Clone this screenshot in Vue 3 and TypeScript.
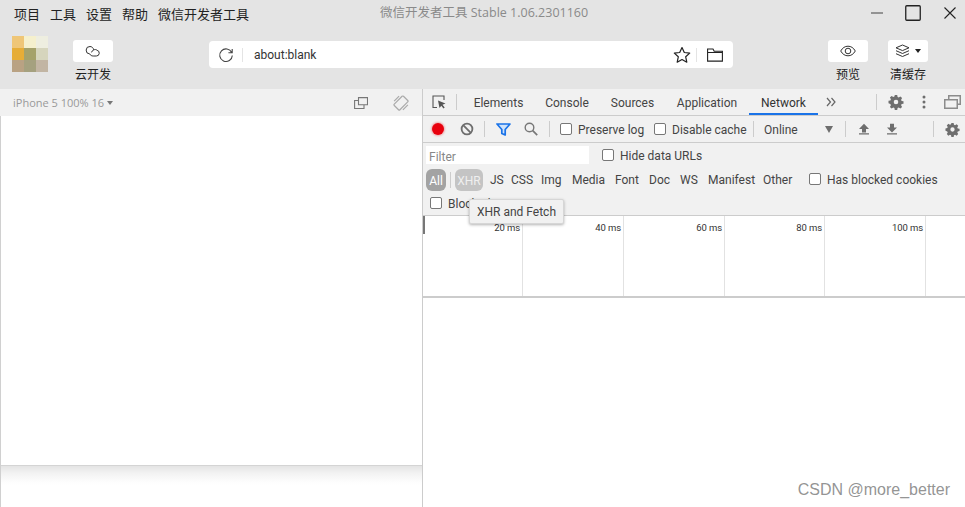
<script setup lang="ts">
const menus: string[] = ['项目', '工具', '设置', '帮助', '微信开发者工具']
const tabs: { name: string; w: number }[] = [
  { name: 'Elements', w: 71 },
  { name: 'Console', w: 66 },
  { name: 'Sources', w: 65 },
  { name: 'Application', w: 84 },
  { name: 'Network', w: 69 },
]
const types: { name: string; w: number }[] = [
  { name: 'JS', w: 21 },
  { name: 'CSS', w: 30 },
  { name: 'Img', w: 31 },
  { name: 'Media', w: 43 },
  { name: 'Font', w: 34 },
  { name: 'Doc', w: 31 },
  { name: 'WS', w: 28 },
  { name: 'Manifest', w: 55 },
  { name: 'Other', w: 46 },
]
const ticks: { label: string; w: number }[] = [
  { label: '20 ms', w: 100 },
  { label: '40 ms', w: 101 },
  { label: '60 ms', w: 101 },
  { label: '80 ms', w: 100 },
  { label: '100 ms', w: 101 },
  { label: '', w: 40 },
]
const mosaic: string[] = ['#efc677', '#f5f0cd', '#eeeee0', '#e6ad37', '#a5a26a', '#d6d5bd', '#b9a283', '#a5a17f', '#c2b5a3']
</script>

<template>
  <div class="app">
    <header class="titlebar">
      <nav class="menus"><span v-for="m in menus" :key="m">{{ m }}</span></nav>
      <div class="title">微信开发者工具 Stable 1.06.2301160</div>
      <div class="winctl">
        <svg width="14" height="14" viewBox="0 0 14 14"><path d="M1 7h12" stroke="#666" stroke-width="1.3"/></svg>
        <svg width="16" height="16" viewBox="0 0 16 16"><rect x=".75" y=".75" width="14.5" height="14.5" rx="1" fill="none" stroke="#222" stroke-width="1.3"/></svg>
        <svg width="14" height="14" viewBox="0 0 14 14"><path d="M1.5 1.5l11 11M12.500 1.500l-11 11" stroke="#222" stroke-width="1.1"/></svg>
      </div>
    </header>

    <section class="toolbar">
      <div class="logo"><i v-for="(c, i) in mosaic" :key="i" class="cell" :style="{ background: c }"></i></div>
      <div class="tool cloud">
        <button class="tbtn"><svg width="16" height="12" viewBox="0 0 16 12"><path d="M5 1.500a3.700 3.700 0 0 0-.3 7.400c.8 1.500 2 2.100 3.500 2.100h3.100a2.900 2.900 0 0 0 .8-5.700C11 4.300 9.800 4.400 8.800 4.900 8.300 2.800 6.800 1.500 5 1.500zM6.500 7.400c.3-1.300 1.200-2.100 2.300-2.500" fill="none" stroke="#333" stroke-width="1"/></svg></button>
        <span>云开发</span>
      </div>
      <div class="address">
        <svg class="refresh" width="16" height="16" viewBox="0 0 16 16"><path d="M13.700 5.500A6.300 6.300 0 1 0 14.300 8.500M14.200 2v3.800h-3.800" fill="none" stroke="#444" stroke-width="1.100"/></svg>
        <i class="addr-sep"></i>
        <span class="url">about:blank</span>
        <svg class="star" width="18" height="18" viewBox="0 0 18 18"><path d="M9 1.500l2.300 5 5.400.6-4 3.700 1.100 5.400L9 13.500l-4.800 2.700 1.100-5.400-4-3.700 5.400-.6z" fill="none" stroke="#222" stroke-width="1.200" stroke-linejoin="round"/></svg>
        <i class="addr-sep sep2"></i>
        <svg class="folder" width="16" height="14" viewBox="0 0 16 14"><path d="M.6 1h5.400l1.200 2.200h8.200v9.900H.6zM.6 4.500h14.800" fill="none" stroke="#222" stroke-width="1.100"/></svg>
      </div>
      <div class="tool preview">
        <button class="tbtn"><svg width="16" height="12" viewBox="0 0 16 12"><path d="M.7 6C2.500 2.800 5 1.200 8 1.200S13.500 2.800 15.300 6c-1.800 3.200-4.300 4.800-7.300 4.800S2.500 9.200.7 6z" fill="none" stroke="#333" stroke-width="1"/><circle cx="8" cy="6" r="2.800" fill="none" stroke="#333" stroke-width="1"/></svg></button>
        <span>预览</span>
      </div>
      <div class="tool clean">
        <button class="tbtn"><svg width="15" height="14" viewBox="0 0 15 14"><path d="M7.500 1L14 3.800 7.500 6.600 1 3.800zM1 6.700l6.500 2.800L14 6.700M1 9.700l6.500 2.800L14 9.700" fill="none" stroke="#333" stroke-width="1"/></svg><i class="caret"></i></button>
        <span>清缓存</span>
      </div>
    </section>

    <main class="main">
      <section class="sim">
        <div class="sim-head">
          <span class="device">iPhone 5 100% 16 <i class="mini-caret"></i></span>
          <svg class="sim-ico1" width="14" height="12" viewBox="0 0 14 12"><path d="M4.500.6h9v7.200h-9zM4.500 3.500H.6v8h9.400V7.800" fill="none" stroke="#777" stroke-width="1.100"/></svg>
          <svg class="sim-ico2" width="16" height="16" viewBox="0 0 16 16"><g transform="rotate(45 8 8)" fill="none" stroke="#aaa" stroke-width="1.200"><rect x="4" y="1.500" width="8" height="13" rx="1"/><path d="M1.800 4.500v7M14.200 4.500v7"/></g></svg>
        </div>
        <div class="screen"></div>
        <div class="screen-shadow"></div>
      </section>

      <section class="devtools">
        <div class="tabs">
          <svg class="inspect" width="14" height="14" viewBox="0 0 14 14"><path d="M5 12.500H1V1h11v4" fill="none" stroke="#555" stroke-width="1.100"/><path d="M6 5.500l7.500 3-3 1.200 2.200 2.800-1.200 1-2.200-2.800L7.500 13z" fill="#555"/></svg>
          <i class="vsep s1"></i>
          <div class="tab" v-for="t in tabs" :key="t.name" :class="{ active: t.name === 'Network' }" :style="{ width: t.w + 'px' }">{{ t.name }}</div>
          <svg class="more" width="10" height="10" viewBox="0 0 10 10"><path d="M1 1l3.500 4L1 9M5.500 1L9 5 5.500 9" fill="none" stroke="#666" stroke-width="1.200"/></svg>
          <i class="vsep s2"></i>
          <svg class="gear" width="16" height="16" viewBox="0 0 16 16"><path fill="#6e6e6e" fill-rule="evenodd" d="M6.800 1h2.400l.4 1.900 1.100.5 1.700-1 1.700 1.700-1 1.700.5 1.100 1.900.4v2.400l-1.900.4-.5 1.100 1 1.700-1.700 1.700-1.700-1-1.100.5-.4 1.900H6.800l-.4-1.900-1.100-.5-1.700 1-1.700-1.700 1-1.700-.5-1.100L.5 9.200V6.800l1.900-.4.500-1.100-1-1.700 1.700-1.700 1.700 1 1.100-.5zM8 5.700a2.300 2.300 0 1 0 0 4.600 2.300 2.300 0 0 0 0-4.600z"/></svg>
          <svg class="dots" width="4" height="14" viewBox="0 0 4 14"><circle cx="2" cy="2" r="1.500" fill="#6e6e6e"/><circle cx="2" cy="7" r="1.500" fill="#6e6e6e"/><circle cx="2" cy="12" r="1.500" fill="#6e6e6e"/></svg>
          <svg class="dock" width="17" height="14" viewBox="0 0 17 14"><path fill="#8c8c8c" fill-rule="evenodd" d="M4 0h13v10h-3v4H0V4h4zm1.500 1.500v2.500h8.500v4.500h1.500v-7zM1.500 5.500v7h11v-7z"/></svg>
        </div>

        <div class="net-bar">
          <i class="record"></i>
          <svg class="stop" width="14" height="14" viewBox="0 0 14 14"><circle cx="7" cy="7" r="5.400" fill="none" stroke="#6e6e6e" stroke-width="1.800"/><path d="M3.200 3.200l7.600 7.600" stroke="#6e6e6e" stroke-width="1.800"/></svg>
          <i class="vsep v1"></i>
          <svg class="funnel" width="15" height="13" viewBox="0 0 15 13"><path d="M1 1h13L9.200 6.500V12l-3.400-1.500v-4z" fill="#cfe3fb" stroke="#1a73e8" stroke-width="1.700" stroke-linejoin="round"/></svg>
          <svg class="search" width="14" height="14" viewBox="0 0 14 14"><circle cx="5.500" cy="5.500" r="4.300" fill="none" stroke="#777" stroke-width="1.400"/><path d="M8.700 8.700l4.500 4.500" stroke="#777" stroke-width="1.700"/></svg>
          <i class="vsep v2"></i>
          <i class="chk c1"></i><span class="lbl l1">Preserve log</span>
          <i class="chk c2"></i><span class="lbl l2">Disable cache</span>
          <i class="vsep v3"></i>
          <span class="lbl online">Online</span>
          <i class="tri"></i>
          <i class="vsep v4"></i>
          <svg class="arrow a1" width="12" height="12" viewBox="0 0 12 12"><path d="M6 .8L11 6H8v3.500H4V6H1zM1 10.200h10v1.300H1z" fill="#6e6e6e"/></svg>
          <svg class="arrow a2" width="12" height="12" viewBox="0 0 12 12"><path d="M4 .8h4v3.700h3L6 9.600 1 4.500h3zM1 10.200h10v1.300H1z" fill="#6e6e6e"/></svg>
          <i class="vsep v5"></i>
          <svg class="gear2" width="15" height="15" viewBox="0 0 16 16"><path fill="#6e6e6e" fill-rule="evenodd" d="M6.800 1h2.400l.4 1.900 1.100.5 1.700-1 1.700 1.700-1 1.700.5 1.100 1.900.4v2.400l-1.900.4-.5 1.100 1 1.700-1.700 1.700-1.700-1-1.100.5-.4 1.900H6.800l-.4-1.900-1.100-.5-1.700 1-1.700-1.700 1-1.700-.5-1.100L.5 9.200V6.800l1.900-.4.500-1.100-1-1.700 1.700-1.700 1.700 1 1.100-.5zM8 5.700a2.300 2.300 0 1 0 0 4.600 2.300 2.300 0 0 0 0-4.600z"/></svg>
        </div>

        <div class="filters">
          <div class="f-row1">
            <div class="filter-input">Filter</div>
            <i class="chk"></i><span class="lbl">Hide data URLs</span>
          </div>
          <div class="f-row2">
            <span class="pill all">All</span>
            <i class="vsep p-sep"></i>
            <span class="pill xhr">XHR</span>
            <span v-for="t in types" :key="t.name" class="type" :style="{ width: t.w + 'px' }">{{ t.name }}</span>
            <i class="chk c3"></i><span class="lbl">Has blocked cookies</span>
          </div>
          <div class="f-row3">
            <i class="chk"></i><span class="lbl">Blocked Requests</span>
          </div>
          <div class="tooltip">XHR and Fetch</div>
        </div>

        <div class="timeline">
          <i class="tick-mark"></i>
          <div class="tick" v-for="(t, i) in ticks" :key="i" :style="{ width: t.w + 'px' }">{{ t.label }}</div>
        </div>
        <div class="requests"></div>
      </section>
    </main>
    <div class="watermark">CSDN @more_better</div>
  </div>
</template>

<style>
html, body { margin: 0; padding: 0; background: #fff; overflow: hidden; }
</style>

<style scoped>
.app {
  position: relative;
  width: 965px;
  height: 507px;
  display: flex;
  flex-direction: column;
  overflow: hidden;
  background: #e4e4e4;
  color: #222;
  font-family: "Open Sans", "Noto Sans CJK SC", sans-serif;
  font-size: 12px;
}
i { display: block; font-style: normal; }
.titlebar { height: 26px; display: flex; align-items: center; position: relative; flex: none; }
.menus { display: flex; margin-left: 14px; gap: 10px; font-size: 13px; color: #222; }
.title { position: absolute; left: 380px; top: 4px; color: #8a8a8a; font-size: 12.5px; line-height: 18px; white-space: nowrap; }
.winctl { margin-left: auto; display: flex; align-items: center; margin-right: 8px; }
.winctl svg:nth-child(1) { margin-right: 21px; }
.winctl svg:nth-child(2) { margin-right: 22px; }
.toolbar { height: 63px; position: relative; display: flex; flex: none; }
.logo { margin: 10px 0 0 12px; width: 36px; height: 36px; display: grid; grid-template-columns: repeat(3, 12px); grid-auto-rows: 12px; }
.tool { display: flex; flex-direction: column; align-items: center; width: 40px; font-size: 12px; line-height: 16px; color: #222; }
.tbtn { margin-top: 14px; margin-bottom: 5px; width: 40px; height: 22px; border: 0; border-radius: 3px; padding: 0; background: #fff; display: flex; align-items: center; justify-content: center; gap: 5px; }
.cloud { margin-left: 25px; }
.address { margin: 15px 0 0 96px; width: 524px; height: 27px; box-sizing: border-box; background: #fff; border-radius: 4px; display: flex; align-items: center; position: relative; }
.refresh { margin-left: 9px; }
.addr-sep { width: 1px; height: 14px; background: #e4e4e4; margin-left: 8px; }
.url { margin-left: 11px; font-family: Roboto, sans-serif; font-size: 12px; color: #333; }
.star { margin-left: auto; margin-right: 5px; }
.sep2 { margin: 0; }
.folder { margin: 0 10px 0 10px; }
.preview { margin-left: 95px; }
.clean { margin-left: 20px; }
.caret { border: 3px solid transparent; border-top: 4px solid #222; border-bottom: 0; }
.main { flex: 1; display: flex; min-height: 0; }
.sim { width: 422px; flex: none; background: #fff; display: flex; flex-direction: column; border-left: 1px solid #d0d0d0; box-sizing: border-box; }
.sim-head { height: 27px; flex: none; background: #f1f1f1; margin-left: -1px; display: flex; align-items: center; position: relative; }
.device { margin-left: 13px; color: #999; font-size: 11px; display: inline-flex; align-items: center; gap: 3px; }
.mini-caret { border: 3px solid transparent; border-top: 4px solid #777; border-bottom: 0; margin-top: 1px; }
.sim-ico1 { margin-left: auto; margin-right: 25px; }
.sim-ico2 { margin-right: 13px; }
.screen { height: 350px; flex: none; background: #fff; border-bottom: 1px solid #d4d4d4; box-sizing: border-box; }
.screen-shadow { height: 20px; background: linear-gradient(#e4e4e4, #f2f2f2 35%, #fdfdfd 80%, #fff); }
.devtools { flex: 1; min-width: 0; background: #fff; display: flex; flex-direction: column; border-left: 1px solid #ccc; color: #444; font-family: Roboto, "Noto Sans CJK SC", sans-serif; }
.tabs { height: 27px; flex: none; box-sizing: border-box; background: #f1f1f1; border-bottom: 1px solid #ccc; display: flex; align-items: center; }
.inspect { margin-left: 9px; }
.vsep { width: 1px; height: 16px; background: #ccc; flex: none; }
.s1 { margin: 0 6px 0 10px; }
.tab { height: 26px; line-height: 29px; text-align: center; color: #444; font-size: 12px; box-sizing: border-box; white-space: nowrap; flex: none; }
.tab.active { border-bottom: 2px solid #1a73e8; color: #333; }
.more { margin-left: 8px; }
.s2 { margin-left: 40px; }
.gear { margin-left: 11px; }
.dots { margin-left: 18px; }
.dock { margin-left: 18px; }
.net-bar { height: 27px; flex: none; box-sizing: border-box; background: #f1f1f1; border-bottom: 1px solid #ccc; display: flex; align-items: center; }
.record { width: 12px; height: 12px; border-radius: 50%; background: #e8000d; box-shadow: 0 0 2px 1px rgba(232, 0, 13, .3); margin-left: 9px; }
.stop { margin-left: 16px; }
.v1 { margin-left: 10px; }
.funnel { margin-left: 11px; }
.search { margin-left: 13px; }
.v2 { margin-left: 11px; }
.chk { width: 12px; height: 12px; box-sizing: border-box; border: 1px solid #777; border-radius: 2px; background: #fff; flex: none; }
.lbl { white-space: nowrap; color: #444; font-size: 12px; line-height: 18px; padding-top: 1px; }
.c1 { margin-left: 10px; }
.l1 { margin-left: 6px; width: 65px; }
.c2 { margin-left: 11px; }
.l2 { margin-left: 6px; width: 72px; }
.v3 { margin-left: 9px; }
.online { margin-left: 10px; width: 35px; }
.tri { border-left: 4px solid transparent; border-right: 4px solid transparent; border-top: 7px solid #6e6e6e; margin-left: 26px; }
.v4 { margin-left: 12px; }
.a1 { margin-left: 12px; }
.a2 { margin-left: 16px; }
.v5 { margin-left: 35px; }
.gear2 { margin-left: 11px; }
.filters { height: 73px; flex: none; box-sizing: border-box; background: #f1f1f1; border-bottom: 1px solid #ccc; position: relative; }
.f-row1 { display: flex; align-items: center; height: 18px; padding-top: 3px; }
.filter-input { margin-left: 3px; width: 163px; height: 18px; background: #fff; color: #888; line-height: 22px; padding-left: 3px; box-sizing: border-box; }
.f-row1 .chk { margin-left: 13px; margin-right: 6px; }
.f-row2 { display: flex; align-items: center; height: 22px; margin-top: 5px; padding-left: 3px; }
.pill { height: 22px; line-height: 24px; border-radius: 6px; text-align: center; color: #fff; flex: none; }
.all { width: 20px; background: #a3a3a3; }
.p-sep { height: 16px; margin: 0 4px; }
.xhr { width: 28px; background: #c4c4c4; color: #efefef; margin-right: 7px; }
.type { color: #444; white-space: nowrap; flex: none; line-height: 26px; }
.c3 { margin-right: 6px; margin-top: -2px; }
.f-row2 .lbl { margin-top: -2px; }
.f-row3 { display: flex; align-items: center; height: 18px; margin-top: 3px; padding-left: 7px; }
.f-row3 .chk { margin-right: 6px; }
.tooltip { position: absolute; left: 46px; top: 56px; width: 95px; height: 25px; box-sizing: border-box; background: #f1f1f1; border: 1px solid #d6d6d6; border-radius: 2px; box-shadow: 0 1px 3px rgba(0, 0, 0, .3); line-height: 25px; text-align: center; color: #444; z-index: 5; white-space: nowrap; }
.timeline { height: 82px; flex: none; box-sizing: border-box; display: flex; background: #fff; border-bottom: 2px solid #ccc; position: relative; }
.tick-mark { position: absolute; left: 0; top: 0; width: 2px; height: 18px; background: #777; }
.tick { flex: none; box-sizing: border-box; border-right: 1px solid #e2e2e2; text-align: right; padding: 6px 2px 0 0; font-size: 9.5px; letter-spacing: -.1px; line-height: 12px; color: #333; }
.tick:last-child { border-right: 0; }
.requests { flex: 1; background: #fff; }
.watermark { position: absolute; right: 15px; top: 480px; font-size: 16px; line-height: 19px; color: rgba(120, 120, 120, .8); font-family: "Liberation Sans", sans-serif; white-space: nowrap; }
</style>
